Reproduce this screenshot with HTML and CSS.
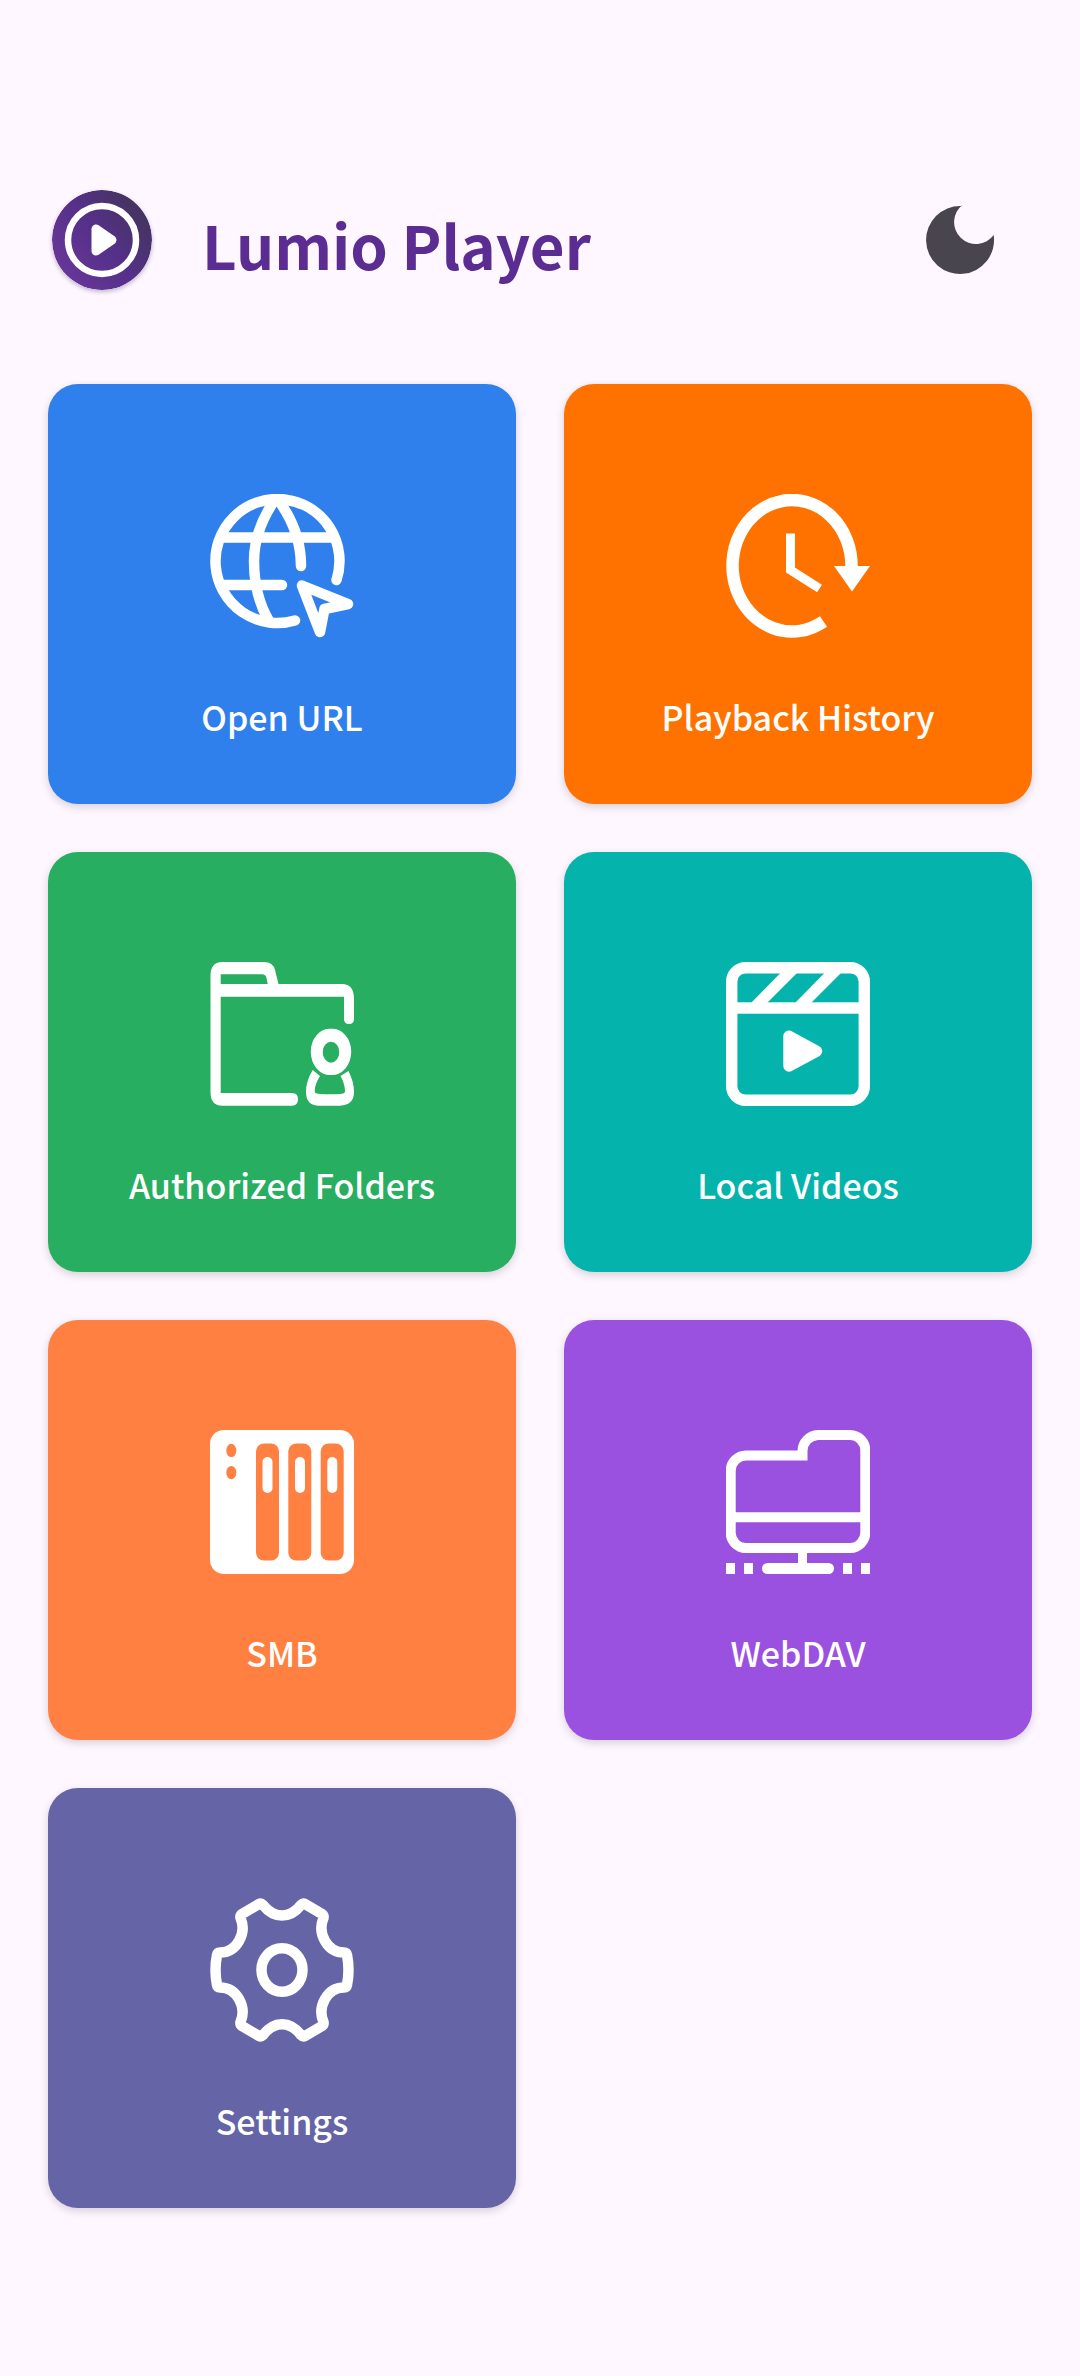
FILE: index.html
```html
<!DOCTYPE html>
<html lang="en">
<head>
  <meta charset="UTF-8" />
  <meta name="viewport" content="width=device-width, initial-scale=1.0"/>
  <title>Lumio Player</title>
  <link rel="stylesheet" href="styles.css">
</head>
<body>

  <!-- HEADER -->
  <header class="header">
    <svg class="logo" viewBox="0 0 100 100" aria-hidden="true">
      <defs>
        <linearGradient id="logo-bg" x1="0.1" y1="0.8" x2="0.9" y2="0.2">
          <stop offset="0" stop-color="#673697"/>
          <stop offset="0.5" stop-color="#55308a"/>
          <stop offset="1" stop-color="#44345f"/>
        </linearGradient>
      </defs>
      <circle cx="50" cy="50" r="50" fill="url(#logo-bg)"/>
      <circle cx="50" cy="50" r="34" fill="none" stroke="#fff" stroke-width="6.5"/>
      <path d="M44 39v22L60 50z" fill="#fff" stroke="#fff" stroke-width="9" stroke-linejoin="round"/>
    </svg>
    <h1 class="title">Lumio Player</h1>
    <button class="theme-toggle" type="button" aria-label="Dark mode">
      <svg class="moon" viewBox="0 0 72 72" aria-hidden="true">
        <path d="M38.7 0.7A21.9 21.9 0 1 0 69.7 31A34 34 0 1 1 37 2z" fill="#49454f"/>
      </svg>
    </button>
  </header>

  <!-- MENU CARDS -->
  <main class="menu">
    <a class="card card-url" href="#open-url">
      <svg class="icon" viewBox="0 0 144 144" aria-hidden="true">
        <g class="line">
          <path d="M126.5 86A62 62 0 1 0 85 126.5"/>
          <path d="M12 43.5H122M12 91H72"/>
          <path d="M64 7C52 25 44 45 44 67C44 90 49 110 59 127"/>
          <path d="M69 7C82 25 91 46 91 72"/>
          <path d="M92 91.5L138 110L114.5 115L110 138z"/>
        </g>
      </svg>
      <span class="label">Open URL</span>
    </a>
    <a class="card card-history" href="#history">
      <svg class="icon" viewBox="0 0 144 144" aria-hidden="true">
        <path d="M125.5 73A59.5 65.7 0 1 0 97.5 127.5" fill="none" stroke="#fff" stroke-width="12.5"/>
        <path d="M64.5 39.5V76L93.5 94.5" fill="none" stroke="#fff" stroke-width="9"/>
        <path d="M108 72H144L126 97.5z" fill="#fff"/>
      </svg>
      <span class="label">Playback History</span>
    </a>
    <a class="card card-folders" href="#folders">
      <svg class="icon" viewBox="0 0 144 144" aria-hidden="true">
        <g fill="#fff" fill-rule="evenodd">
          <path d="M12 0H54Q63 0 65 8L68.5 22H132Q144 22 144 37V57Q144 62 139 62T134 57V34.7H10.7V131H82Q88 131 88 137.3T82 143.7H12Q0.5 143.7 0.5 130V14Q0.5 0 12 0zM10.7 12.3V22H57.7L56.5 16Q55.7 12.3 52 12.3z"/>
          <path d="M121 66.7A19 23.2 0 1 1 121 113A19 23.2 0 1 1 121 66.7zM121 79.7A8.3 10.5 0 1 0 121 100.7A8.3 10.5 0 1 0 121 79.7z"/>
          <path d="M102.7 108L110 114Q105 122 104.7 128.5Q104.7 131.7 108 131.7Q120 133 132 131.7Q135 131.7 135 128.5Q134.5 121 130.5 114L138.5 109Q144 120 144 130Q144 143 130 143.7H109Q96 143.5 96 130Q96 119 102.7 108z"/>
        </g>
      </svg>
      <span class="label">Authorized Folders</span>
    </a>
    <a class="card card-videos" href="#videos">
      <svg class="icon" viewBox="0 0 144 144" aria-hidden="true">
        <rect x="5.7" y="5.7" width="132.6" height="132.6" rx="14" fill="none" stroke="#fff" stroke-width="11.4"/>
        <g fill="#fff">
          <rect x="8" y="40.3" width="128" height="11.4"/>
          <path d="M55 10.5H71.5L41 41H25zM99 10.5H115.5L85 41H69z"/>
          <path d="M63 74.3V104L90.5 89.2z" stroke="#fff" stroke-width="11.4" stroke-linejoin="round"/>
        </g>
      </svg>
      <span class="label">Local Videos</span>
    </a>
    <a class="card card-smb" href="#smb">
      <svg class="icon" viewBox="0 0 144 144" aria-hidden="true">
        <rect width="144" height="144" rx="14" fill="#fff"/>
        <g fill="#ff8040">
          <ellipse cx="21.3" cy="20.4" rx="5" ry="6.7"/>
          <ellipse cx="21.3" cy="42.6" rx="5" ry="6.7"/>
          <rect x="46" y="13.5" width="23" height="117" rx="8"/>
          <rect x="78.3" y="13.5" width="23" height="117" rx="8"/>
          <rect x="110.7" y="13.5" width="23" height="117" rx="8"/>
        </g>
        <g fill="#fff">
          <rect x="52.5" y="27" width="10" height="36" rx="5"/>
          <rect x="85" y="27" width="10" height="36" rx="5"/>
          <rect x="117.3" y="27" width="10" height="36" rx="5"/>
        </g>
      </svg>
      <span class="label">SMB</span>
    </a>
    <a class="card card-webdav" href="#webdav">
      <svg class="icon" viewBox="0 0 144 144" aria-hidden="true">
        <path d="M4.7 41A15.5 15.5 0 0 1 20 25.5H76.5V21A16 16 0 0 1 92 5H124A15.5 15.5 0 0 1 139.3 21V102A15.5 15.5 0 0 1 124 118H20A15.5 15.5 0 0 1 4.7 102zM5 87.3H139" fill="none" stroke="#fff" stroke-width="10"/>
        <g fill="#fff">
          <rect x="72" y="120" width="9" height="16"/>
          <rect x="36" y="133" width="72" height="11" rx="5.5"/>
          <path d="M0 133h9v11H0zM18 133h9v11H18zM117 133h9v11H117zM135 133h9v11H135z"/>
        </g>
      </svg>
      <span class="label">WebDAV</span>
    </a>
    <a class="card card-settings" href="#settings">
      <svg class="icon" viewBox="0 0 144 144" aria-hidden="true">
        <g class="line">
          <path d="M49 6L32 16Q30 17.5 30.5 20C37 35 27 54.5 10 54.5Q7.5 54.5 7 57Q4 72 7 87Q7.5 89.5 10 89.5C27 89.5 37 109 30.5 124Q30 126.5 32 128L49 138Q51 139 53 137C64 122.5 80 122.5 91 137Q93 139 95 138L112 128Q114 126.5 113.5 124C107 109 117 89.5 134 89.5Q136.5 89.5 137 87Q140 72 137 57Q136.5 54.5 134 54.5C117 54.5 107 35 113.5 20Q114 17.5 112 16L95 6Q93 5 91 7C80 21 64 21 53 7Q51 5 49 6z"/>
          <ellipse cx="72" cy="72" rx="20.5" ry="21.7"/>
        </g>
      </svg>
      <span class="label">Settings</span>
    </a>
  </main>

</body>
</html>
```
FILE: styles.css
```css
* {
  box-sizing: border-box;
}

body {
  margin: 0;
  padding: 168px 48px;
  font-family: "Noto Sans CJK SC", "Noto Sans", sans-serif;
  background-color: #fef7ff;
}

/* Header */
.header {
  display: flex;
  align-items: center;
  height: 144px;
  margin-bottom: 72px;
  padding-left: 4px;
}

.logo {
  width: 100px;
  height: 100px;
  border-radius: 50%;
  box-shadow: 0 2px 4px rgba(60, 30, 90, 0.3);
}

.title {
  flex: 1;
  margin: 0;
  padding: 8px 0 0 50px;
  font-size: 60px;
  line-height: 80px;
  font-weight: 700;
  color: #5b2c91;
}

.theme-toggle {
  display: flex;
  align-items: center;
  justify-content: center;
  width: 144px;
  height: 144px;
  padding: 0;
  border: 0;
  background: none;
  cursor: pointer;
}

.moon {
  width: 72px;
  height: 72px;
}

/* Menu */
.menu {
  display: grid;
  grid-template-columns: repeat(2, minmax(0, 1fr));
  gap: 48px;
}

.card {
  display: flex;
  flex-direction: column;
  align-items: center;
  gap: 55px;
  padding: 110px 16px 63px;
  border-radius: 30px;
  box-shadow: 0 3px 8px rgba(0, 0, 0, 0.16);
  color: #fff;
  text-decoration: none;
}

.card-url { background-color: #2f80ed; }
.card-history { background-color: #ff7200; }
.card-folders { background-color: #27ae60; }
.card-videos { background-color: #04b4ac; }
.card-smb { background-color: #ff8040; }
.card-webdav { background-color: #9b51e0; }
.card-settings { background-color: #6464a7; }

.icon {
  width: 144px;
  height: 144px;
}

.line {
  fill: none;
  stroke: #fff;
  stroke-width: 10.5;
  stroke-linecap: round;
  stroke-linejoin: round;
}

.label {
  font-size: 34px;
  line-height: 48px;
  font-weight: 500;
}
```
